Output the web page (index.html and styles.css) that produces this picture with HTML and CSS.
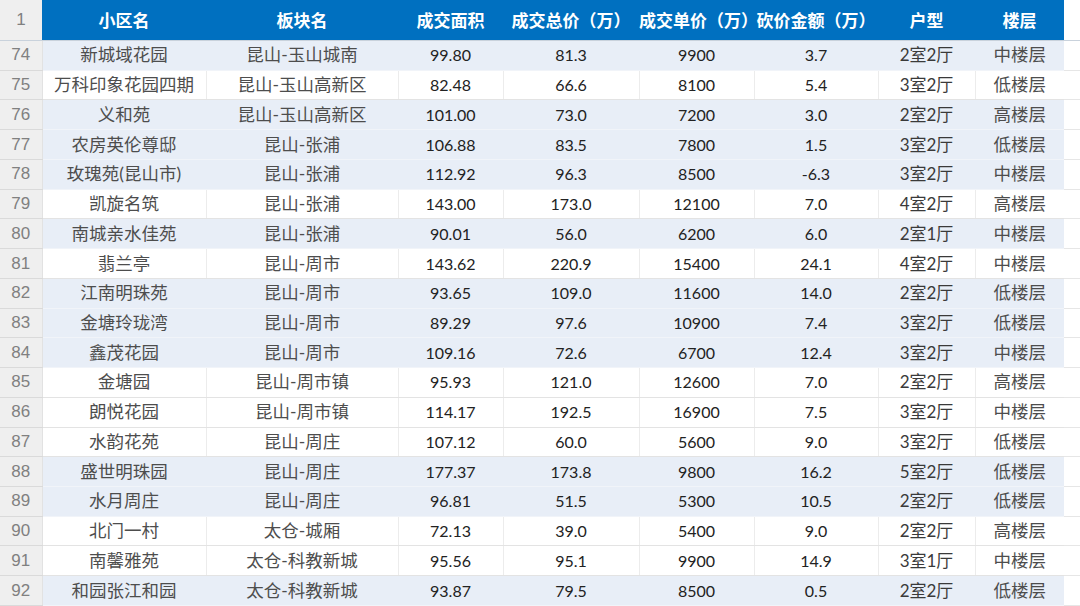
FILE: index.html
```html
<!DOCTYPE html>
<html lang="zh-CN">
<head>
<meta charset="utf-8">
<title>小区成交表</title>
<link rel="stylesheet" href="styles.css">
</head>
<body>
<table class="sheet">
  <colgroup>
    <col class="c-rh"><col class="c-a"><col class="c-b"><col class="c-c"><col class="c-d"><col class="c-e"><col class="c-f"><col class="c-g"><col class="c-h"><col class="c-x">
  </colgroup>
  <thead>
    <tr class="head">
      <th class="rh">1</th>
      <th>小区名</th><th>板块名</th><th>成交面积</th><th>成交总价（万）</th><th>成交单价（万）</th><th>砍价金额（万）</th><th>户型</th><th>楼层</th><th class="x"></th>
    </tr>
  </thead>
  <tbody>
    <tr class="fill"><td class="rh">74</td><td class="cn">新城域花园</td><td class="cn">昆山-玉山城南</td><td>99.80</td><td>81.3</td><td>9900</td><td>3.7</td><td class="mix">2室2厅</td><td class="cn">中楼层</td><td class="x"></td></tr>
    <tr><td class="rh">75</td><td class="cn">万科印象花园四期</td><td class="cn">昆山-玉山高新区</td><td>82.48</td><td>66.6</td><td>8100</td><td>5.4</td><td class="mix">3室2厅</td><td class="cn">低楼层</td><td class="x"></td></tr>
    <tr class="fill"><td class="rh">76</td><td class="cn">义和苑</td><td class="cn">昆山-玉山高新区</td><td>101.00</td><td>73.0</td><td>7200</td><td>3.0</td><td class="mix">2室2厅</td><td class="cn">高楼层</td><td class="x"></td></tr>
    <tr class="fill"><td class="rh">77</td><td class="cn">农房英伦尊邸</td><td class="cn">昆山-张浦</td><td>106.88</td><td>83.5</td><td>7800</td><td>1.5</td><td class="mix">3室2厅</td><td class="cn">低楼层</td><td class="x"></td></tr>
    <tr class="fill"><td class="rh">78</td><td class="cn">玫瑰苑(昆山市)</td><td class="cn">昆山-张浦</td><td>112.92</td><td>96.3</td><td>8500</td><td>-6.3</td><td class="mix">3室2厅</td><td class="cn">中楼层</td><td class="x"></td></tr>
    <tr><td class="rh">79</td><td class="cn">凯旋名筑</td><td class="cn">昆山-张浦</td><td>143.00</td><td>173.0</td><td>12100</td><td>7.0</td><td class="mix">4室2厅</td><td class="cn">高楼层</td><td class="x"></td></tr>
    <tr class="fill"><td class="rh">80</td><td class="cn">南城亲水佳苑</td><td class="cn">昆山-张浦</td><td>90.01</td><td>56.0</td><td>6200</td><td>6.0</td><td class="mix">2室1厅</td><td class="cn">中楼层</td><td class="x"></td></tr>
    <tr><td class="rh">81</td><td class="cn">翡兰亭</td><td class="cn">昆山-周市</td><td>143.62</td><td>220.9</td><td>15400</td><td>24.1</td><td class="mix">4室2厅</td><td class="cn">中楼层</td><td class="x"></td></tr>
    <tr class="fill"><td class="rh">82</td><td class="cn">江南明珠苑</td><td class="cn">昆山-周市</td><td>93.65</td><td>109.0</td><td>11600</td><td>14.0</td><td class="mix">2室2厅</td><td class="cn">低楼层</td><td class="x"></td></tr>
    <tr class="fill"><td class="rh">83</td><td class="cn">金塘玲珑湾</td><td class="cn">昆山-周市</td><td>89.29</td><td>97.6</td><td>10900</td><td>7.4</td><td class="mix">3室2厅</td><td class="cn">低楼层</td><td class="x"></td></tr>
    <tr class="fill"><td class="rh">84</td><td class="cn">鑫茂花园</td><td class="cn">昆山-周市</td><td>109.16</td><td>72.6</td><td>6700</td><td>12.4</td><td class="mix">3室2厅</td><td class="cn">中楼层</td><td class="x"></td></tr>
    <tr><td class="rh">85</td><td class="cn">金塘园</td><td class="cn">昆山-周市镇</td><td>95.93</td><td>121.0</td><td>12600</td><td>7.0</td><td class="mix">2室2厅</td><td class="cn">高楼层</td><td class="x"></td></tr>
    <tr><td class="rh">86</td><td class="cn">朗悦花园</td><td class="cn">昆山-周市镇</td><td>114.17</td><td>192.5</td><td>16900</td><td>7.5</td><td class="mix">3室2厅</td><td class="cn">中楼层</td><td class="x"></td></tr>
    <tr><td class="rh">87</td><td class="cn">水韵花苑</td><td class="cn">昆山-周庄</td><td>107.12</td><td>60.0</td><td>5600</td><td>9.0</td><td class="mix">3室2厅</td><td class="cn">低楼层</td><td class="x"></td></tr>
    <tr class="fill"><td class="rh">88</td><td class="cn">盛世明珠园</td><td class="cn">昆山-周庄</td><td>177.37</td><td>173.8</td><td>9800</td><td>16.2</td><td class="mix">5室2厅</td><td class="cn">低楼层</td><td class="x"></td></tr>
    <tr class="fill"><td class="rh">89</td><td class="cn">水月周庄</td><td class="cn">昆山-周庄</td><td>96.81</td><td>51.5</td><td>5300</td><td>10.5</td><td class="mix">2室2厅</td><td class="cn">低楼层</td><td class="x"></td></tr>
    <tr><td class="rh">90</td><td class="cn">北门一村</td><td class="cn">太仓-城厢</td><td>72.13</td><td>39.0</td><td>5400</td><td>9.0</td><td class="mix">2室2厅</td><td class="cn">高楼层</td><td class="x"></td></tr>
    <tr><td class="rh">91</td><td class="cn">南馨雅苑</td><td class="cn">太仓-科教新城</td><td>95.56</td><td>95.1</td><td>9900</td><td>14.9</td><td class="mix">3室1厅</td><td class="cn">中楼层</td><td class="x"></td></tr>
    <tr class="fill"><td class="rh">92</td><td class="cn">和园张江和园</td><td class="cn">太仓-科教新城</td><td>93.87</td><td>79.5</td><td>8500</td><td>0.5</td><td class="mix">2室2厅</td><td class="cn">低楼层</td><td class="x"></td></tr>
  </tbody>
</table>
</body>
</html>
```

FILE: styles.css
```css
html, body {
  margin: 0;
  padding: 0;
  background: #ffffff;
  overflow: hidden;
}

.sheet {
  width: 1080px;
  table-layout: fixed;
  border-collapse: collapse;
  border-spacing: 0;
  font-family: Lato, "Noto Sans CJK SC", sans-serif;
}

.c-rh { width: 42px; }
.c-a { width: 164px; }
.c-b { width: 192px; }
.c-c { width: 105px; }
.c-d { width: 136px; }
.c-e { width: 115px; }
.c-f { width: 124px; }
.c-g { width: 97px; }
.c-h { width: 89px; }
.c-x { width: 16px; }

.sheet th,
.sheet td {
  padding: 0;
  text-align: center;
  vertical-align: middle;
  white-space: nowrap;
  overflow: hidden;
}

/* header row */
.head th {
  height: 40px;
  background: #0070c0;
  color: #ffffff;
  font-family: "Noto Sans CJK SC", sans-serif;
  font-weight: 700;
  font-size: 17px;
  line-height: 20px;
  border-bottom: 1px solid #c9d2dc;
  overflow: visible;
}

.head th.rh {
  background: #efefef;
  color: #808080;
  font-family: "Liberation Sans", sans-serif;
  font-weight: 400;
  font-size: 17px;
}

.head th.x {
  background: #ffffff;
}

/* data rows */
.sheet tbody td {
  height: 28.74px;
  font-size: 16px;
  line-height: 20px;
  color: #222222;
  background: #ffffff;
  border-bottom: 1px solid #e3e3e3;
  border-left: 1px solid #ececec;
}

.sheet tbody td.cn {
  font-size: 17.5px;
  color: #4d4d4d;
}

.sheet tbody td.mix {
  font-size: 17px;
  color: #3a3a3a;
}

.sheet tbody tr.fill td {
  background: #e8eef7;
  border-bottom-color: #f1f4f9;
  border-left-color: #e8eef7;
}

.sheet tbody td.rh,
.sheet tbody tr.fill td.rh {
  background: #efefef;
  color: #808080;
  font-family: "Liberation Sans", sans-serif;
  font-size: 17px;
  border-left: none;
  border-right: 1px solid #e2e2e2;
  border-bottom: 1px solid #dadada;
}

.sheet tbody td.x,
.sheet tbody tr.fill td.x {
  background: #ffffff;
  border-left: none;
  border-bottom: 1px solid #e6e6e6;
}
```
